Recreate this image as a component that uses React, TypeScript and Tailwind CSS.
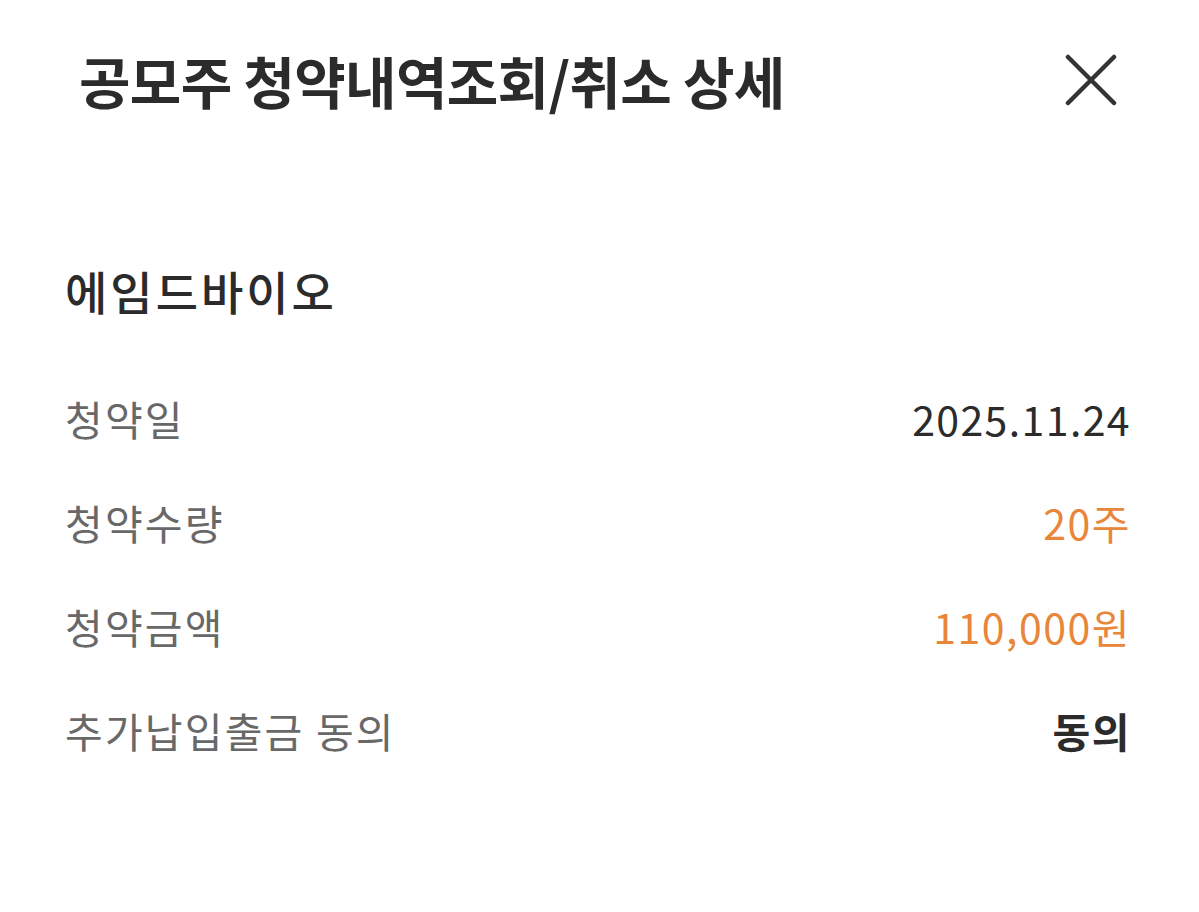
import React from "react";

const rows: { label: string; value: string; tone: "dark" | "orange" | "bold" }[] = [
  { label: "청약일", value: "2025.11.24", tone: "dark" },
  { label: "청약수량", value: "20주", tone: "orange" },
  { label: "청약금액", value: "110,000원", tone: "orange" },
  { label: "추가납입출금 동의", value: "동의", tone: "bold" },
];

export default function App() {
  return (
    <div
      className="w-[1199px] h-[912px] bg-white overflow-hidden"
      style={{ fontFamily: '"Noto Sans CJK KR", "Noto Sans", sans-serif' }}
    >
      <div className="flex items-center justify-between pl-[79px] pr-[82px] pt-[40px] h-[120px]">
        <h1 className="text-[56px] font-bold text-[#2b2b2b] tracking-[-0.7px] leading-none">
          공모주 청약내역조회/취소 상세
        </h1>
        <svg width="52" height="52" viewBox="0 0 52 52" className="shrink-0">
          <path d="M3 3 L49 49 M49 3 L3 49" stroke="#333" strokeWidth="4.5" strokeLinecap="round" />
        </svg>
      </div>
      <div className="pl-[65px] pr-[68px] pt-[147px]">
        <h2 className="text-[46px] font-medium text-[#2b2b2b] leading-none tracking-[3px]">에임드바이오</h2>
        <div className="mt-[85px] flex flex-col gap-[64.3px]">
          {rows.map((r) => (
            <div key={r.label} className="flex items-center justify-between leading-none h-[40px]">
              <span className="text-[41px] text-[#686868] tracking-[2.2px]">{r.label}</span>
              <span
                className={
                  r.tone === "orange"
                    ? "text-[41px] text-[#e8863a] tracking-[1.5px]"
                    : r.tone === "bold"
                    ? "text-[41px] font-bold text-[#2b2b2b] tracking-[1.5px]"
                    : "text-[41px] text-[#2b2b2b] tracking-[1.4px]"
                }
              >
                {r.value}
              </span>
            </div>
          ))}
        </div>
      </div>
    </div>
  );
}
